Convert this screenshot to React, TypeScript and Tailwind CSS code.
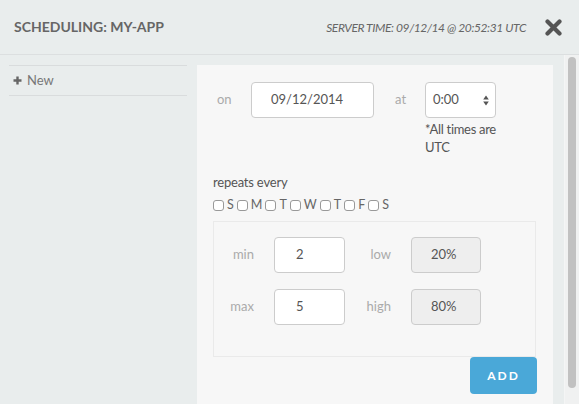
import React from "react";

const font = { fontFamily: "Lato, 'Open Sans', sans-serif" };

function Checkbox({ label }: { label: string }) {
  return (
    <span className="inline-flex items-center mr-[3px]">
      <span className="inline-block w-[11px] h-[11px] rounded-[3px] border border-[#999] bg-white" />
      <span className="ml-[3px] text-[12.5px] text-[#666]">{label}</span>
    </span>
  );
}

export default function App() {
  return (
    <div className="w-[579px] h-[404px] bg-[#e9eded] overflow-hidden flex flex-col" style={font}>
      {/* Header */}
      <div className="h-[55px] shrink-0 flex items-center border-b border-[#dcdfe0] pl-[14px] pr-[17px]">
        <div className="text-[14px] font-bold text-[#666] mt-[-1px]">SCHEDULING: MY-APP</div>
        <div className="ml-auto text-[12px] italic text-[#666] tracking-[-0.4px] mt-[2px]">SERVER TIME: 09/12/14 @ 20:52:31 UTC</div>
        <svg className="ml-[19px] mt-[1px]" width="17" height="17" viewBox="0 0 17 17">
          <path d="M2.5 2.5 L14.5 14.5 M14.5 2.5 L2.5 14.5" stroke="#555" strokeWidth="4.2" strokeLinecap="round" />
        </svg>
      </div>
      {/* Body */}
      <div className="flex flex-1 min-h-0">
        <div className="flex flex-1 pt-[10px] pl-[9px] pr-[11px]">
          {/* Sidebar */}
          <div className="w-[178px] shrink-0">
            <div className="h-[31px] border-t border-b border-[#d9dcdd] flex items-center pl-[4px] text-[13px] text-[#777]">
              <svg width="9" height="9" viewBox="0 0 9 9" className="mr-[5px]">
                <path d="M4.5 0.5 V8.5 M0.5 4.5 H8.5" stroke="#666" strokeWidth="2.4" />
              </svg>
              New
            </div>
          </div>
          {/* Main */}
          <div className="ml-[10px] flex-1 bg-[#f7f7f7] pt-[17px] pl-[16px] pr-[17px]">
            <div className="flex items-start">
              <div className="w-[38px] h-[36px] flex items-center pl-[4px] text-[13px] text-[#aaa]">on</div>
              <div className="w-[123px] h-[36px] rounded-[4px] border border-[#ccc] bg-white flex items-center pl-[19px] text-[13px] text-[#555]">09/12/2014</div>
              <div className="ml-[21px] w-[30px] h-[36px] flex items-center text-[13px] text-[#aaa]">at</div>
              <div className="w-[72px]">
                <div className="w-[71px] h-[36px] rounded-[4px] border border-[#ccc] bg-white flex items-center pl-[7px] pr-[6px] text-[13px] text-[#555]">
                  0:00
                  <svg className="ml-auto" width="6" height="11" viewBox="0 0 6 11">
                    <path d="M3 0.5 L5.8 4.5 H0.2 Z M3 10.5 L5.8 6.5 H0.2 Z" fill="#555" />
                  </svg>
                </div>
                <div className="mt-[2px] text-[13px] leading-[18px] text-[#555] whitespace-nowrap tracking-[-0.3px]">
                  *All times are
                  <br />
                  UTC
                </div>
              </div>
            </div>
            <div className="mt-[17px] text-[13px] leading-[18px] text-[#555] tracking-[-0.2px]">repeats every</div>
            <div className="mt-[6px] h-[17px] flex items-center">
              {["S", "M", "T", "W", "T", "F", "S"].map((d, i) => (
                <Checkbox key={i} label={d} />
              ))}
            </div>
            <div className="mt-[7px] h-[136px] border border-[#eaeaea] pt-[15px]">
              <div className="flex items-center h-[36px]">
                <div className="w-[40px] text-right text-[13px] text-[#aaa]">min</div>
                <div className="ml-[20px] w-[71px] h-[36px] rounded-[4px] border border-[#ccc] bg-white flex items-center pl-[21px] text-[13px] text-[#555]">2</div>
                <div className="w-[46px] text-right text-[13px] text-[#aaa]">low</div>
                <div className="ml-[20px] w-[70px] h-[36px] rounded-[4px] border border-[#ccc] bg-[#eee] flex items-center pl-[19px] text-[13px] text-[#555]">20%</div>
              </div>
              <div className="flex items-center h-[36px] mt-[16px]">
                <div className="w-[40px] text-right text-[13px] text-[#aaa]">max</div>
                <div className="ml-[20px] w-[71px] h-[36px] rounded-[4px] border border-[#ccc] bg-white flex items-center pl-[21px] text-[13px] text-[#555]">5</div>
                <div className="w-[46px] text-right text-[13px] text-[#aaa]">high</div>
                <div className="ml-[20px] w-[70px] h-[36px] rounded-[4px] border border-[#ccc] bg-[#eee] flex items-center pl-[19px] text-[13px] text-[#555]">80%</div>
              </div>
            </div>
            <div className="flex justify-end">
              <div className="mr-[-1px] w-[67px] h-[37px] rounded-[4px] bg-[#4aa8d8] flex items-center justify-center text-[12px] font-bold text-white tracking-[2px]">ADD</div>
            </div>
          </div>
        </div>
        {/* Scrollbar */}
        <div className="w-[15px] shrink-0 border-l border-[#f4f5f5] bg-[#f0f1f1] pt-[2px] pl-[3px]">
          <div className="w-[8px] h-[331px] rounded-full bg-[#c1c1c1]" />
        </div>
      </div>
    </div>
  );
}
